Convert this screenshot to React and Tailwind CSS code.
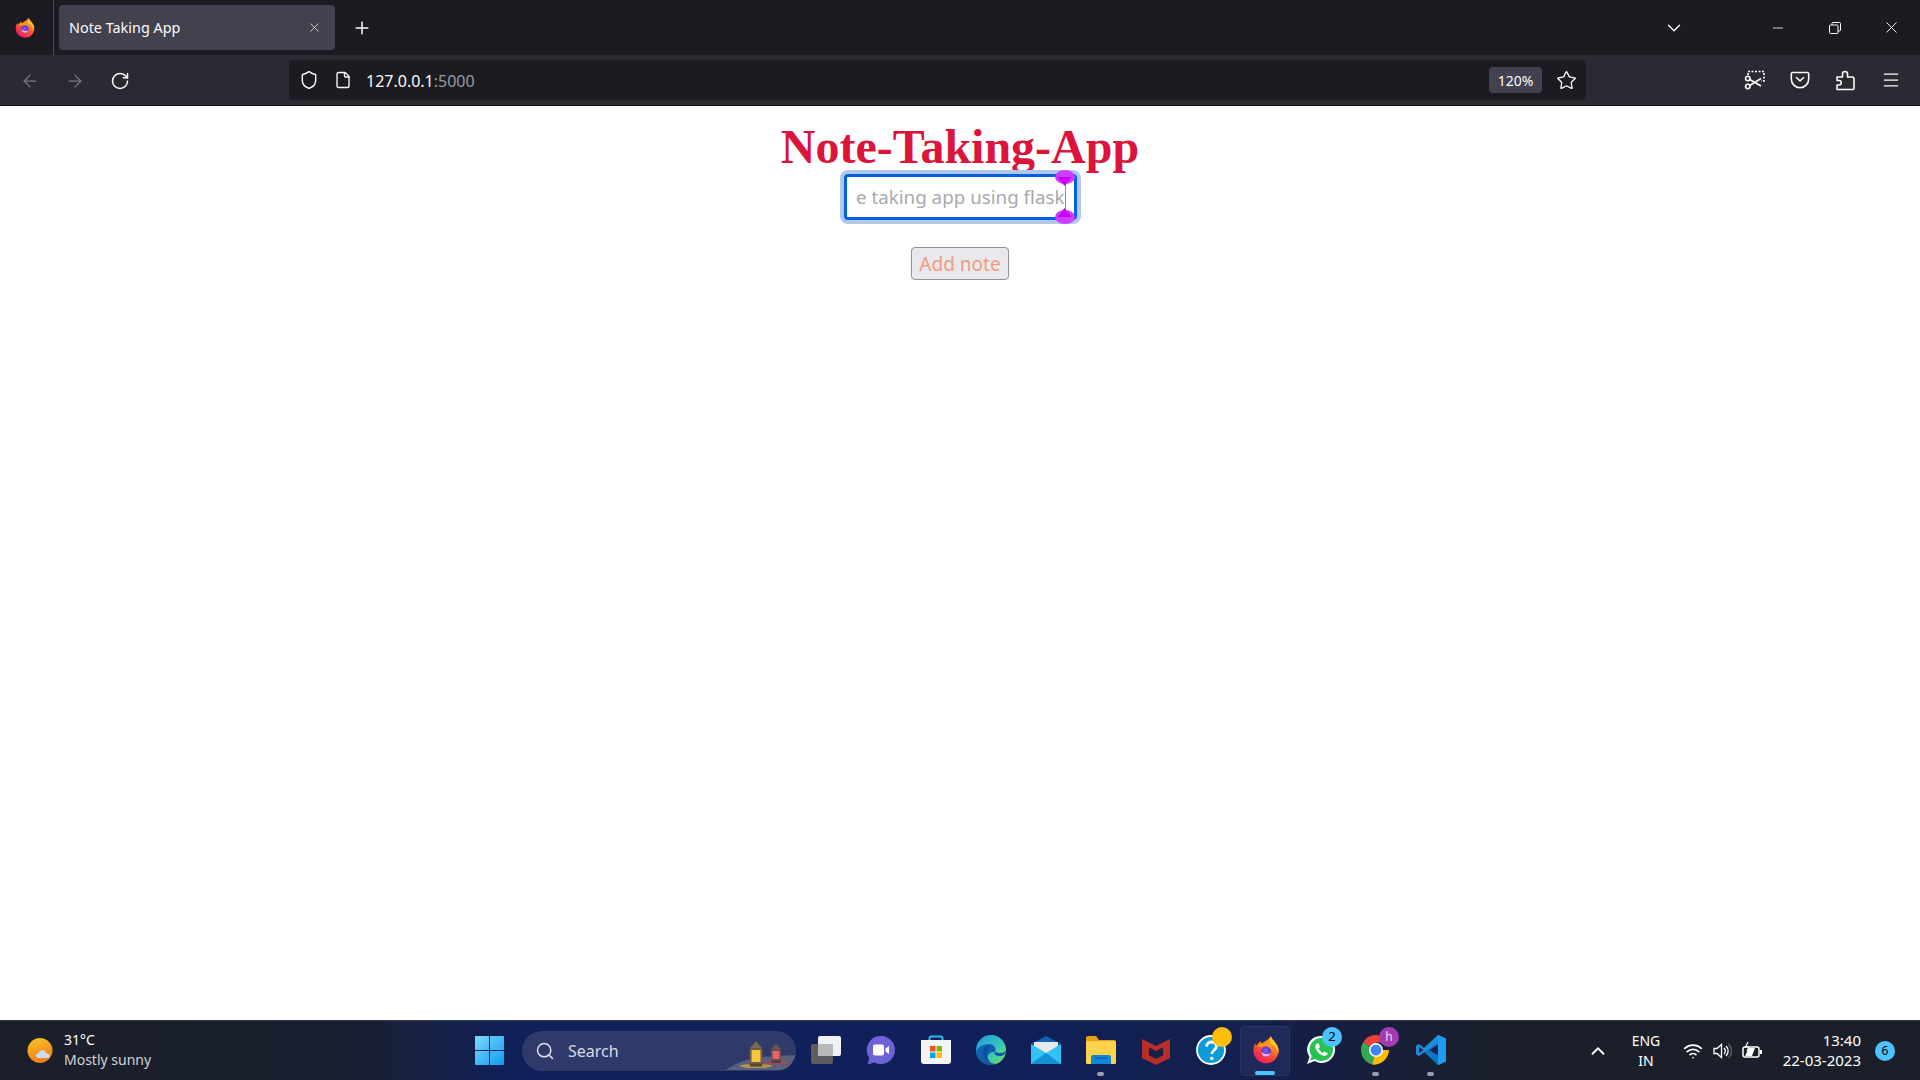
import React from "react";
import { ArrowLeft, ArrowRight, RotateCw, Shield, File, Star, ChevronDown, ChevronUp, Menu, Search, Plus, X, Minus, Wifi } from "lucide-react";

const ui = { fontFamily: '"Noto Sans", "Open Sans", sans-serif' };

function Firefox({ size, id }) {
  return (
    <svg width={size} height={size} viewBox="0 0 32 32">
      <defs>
        <linearGradient id={id + "a"} x1="0.8" y1="0.1" x2="0.25" y2="0.95">
          <stop offset="0" stopColor="#ffb21f" />
          <stop offset="0.5" stopColor="#ff5a22" />
          <stop offset="1" stopColor="#f0186a" />
        </linearGradient>
        <radialGradient id={id + "b"} cx="0.45" cy="0.45" r="0.6">
          <stop offset="0" stopColor="#8a5cf0" />
          <stop offset="1" stopColor="#5b2bb5" />
        </radialGradient>
      </defs>
      <path d="M21 1c.6 3.4 2.200 4.600 4.600 7 2.400 2.600 3.900 5.500 3.900 8.600C29.500 24 23.500 30 16 30S2.500 24 2.500 16.500c0-3 .8-5.600 2.200-7.800.3 1.200.9 2 1.700 2.600.4-2 2-3.600 4.200-4.800 0 1.400.5 2.400 1.500 2.900C13.500 6 19 6 21 1z" fill={`url(#${id}a)`} />
      <path d="M21 1c1.500 3.500 5.500 6.500 7.200 10.500 1 2.500 1.300 5 .8 8C27.500 13 24 10 19.500 9.500c1.500-2.500 1.500-5.500 1.500-8.500z" fill="#ffc426" />
      <path d="M6 12c3-3 7-4.500 11-3 4 1.400 6.500 5 6 9-1-3-3-5-6-5.500-4-.6-7.500 0-11-.5z" fill="#ff9a1f" />
      <circle cx="16" cy="17.500" r="5.500" fill={`url(#${id}b)`} />
      <path d="M10.500 18c.6 3 3 5 6 4.800 2.500-.2 4.500-2 5-4.300-1 1.300-2.800 2-4.600 1.800-2.500-.2-4.600-1-6.400-2.300z" fill="#f3c6ff" opacity="0.85" />
    </svg>
  );
}

function Scissors() {
  return (
    <svg width="22" height="22" viewBox="0 0 22 22" fill="none" stroke="#fbfbfe" strokeWidth="1.600">
      <path d="M4 6V2.500h16V12h-3" strokeDasharray="2 1.500" />
      <circle cx="3.800" cy="9.500" r="2.200" />
      <circle cx="3.800" cy="17.500" r="2.200" />
      <path d="M5.800 10.500 17 17M5.800 16.500 17 9.500" />
    </svg>
  );
}

function Pocket() {
  return (
    <svg width="20" height="20" viewBox="0 0 20 20" fill="none" stroke="#fbfbfe" strokeWidth="1.600" strokeLinecap="round" strokeLinejoin="round">
      <path d="M2.800 2.500h14.400a1.500 1.500 0 0 1 1.500 1.500v5a8.700 8.700 0 0 1-17.400 0V4a1.500 1.500 0 0 1 1.500-1.500z" />
      <path d="M6.500 7.500 10 11l3.500-3.500" />
    </svg>
  );
}

function PuzzleIcon() {
  return (
    <svg width="21" height="21" viewBox="0 0 21 21" fill="none" stroke="#fbfbfe" strokeWidth="1.600" strokeLinejoin="round">
      <path d="M2 19.500V15h2a2.200 2.200 0 0 0 0-4.500H2V7h5.500V4a2.500 2.500 0 0 1 5 0v3H17a2 2 0 0 1 2 2v9.500a1 1 0 0 1-1 1z" />
    </svg>
  );
}

function Restore() {
  return (
    <svg width="12" height="12" viewBox="0 0 12 12" fill="none" stroke="#fbfbfe" strokeWidth="1">
      <rect x="0.500" y="3" width="8.500" height="8.500" rx="1" />
      <path d="M3 3V1.500a1 1 0 0 1 1-1h6.500a1 1 0 0 1 1 1V8a1 1 0 0 1-1 1H9" />
    </svg>
  );
}

function Windows() {
  return (
    <svg width="29" height="29" viewBox="0 0 29 29">
      <defs>
        <linearGradient id="win" x1="0" y1="0" x2="1" y2="1">
          <stop offset="0" stopColor="#7fd8fb" />
          <stop offset="1" stopColor="#0d9bf0" />
        </linearGradient>
      </defs>
      <path d="M1 0h13v14H0V1a1 1 0 0 1 1-1zM15 0h13a1 1 0 0 1 1 1v13H15zM0 15h14v14H1a1 1 0 0 1-1-1zM15 15h14v13a1 1 0 0 1-1 1H15z" fill="url(#win)" />
    </svg>
  );
}

function Lanterns() {
  return (
    <svg width="70" height="30" viewBox="0 0 70 30">
      <path d="M0 29c12-9 24-11 36-13l34-2-4 8c-3 5-8 7-12 7z" fill="#5a5f7c" />
      <ellipse cx="30" cy="25" rx="16" ry="2" fill="#d9b23a" opacity="0.7" />
      <ellipse cx="50" cy="22" rx="13" ry="1.600" fill="#b8434f" opacity="0.7" />
      <path d="M30 0l6 7H24z" fill="#7a6a55" />
      <rect x="23.500" y="7" width="13" height="16" rx="1.500" fill="#6e5b3f" />
      <rect x="25.500" y="9" width="9" height="12" fill="#f6c743" />
      <rect x="24" y="23" width="12" height="2.500" fill="#54452f" />
      <path d="M50 3l5 5H45z" fill="#6d5a50" />
      <rect x="45" y="8" width="10" height="12" rx="1" fill="#6b4a46" />
      <rect x="46.500" y="10" width="7" height="8" fill="#e2636c" />
      <rect x="45.500" y="20" width="9" height="2" fill="#4e3b38" />
    </svg>
  );
}

function TaskView() {
  return (
    <svg width="30" height="28" viewBox="0 0 30 28">
      <rect x="0" y="8" width="22" height="20" rx="2" fill="#5c5d60" />
      <rect x="7" y="0" width="23" height="20" rx="2" fill="#f1f1f3" />
      <rect x="7" y="8" width="15" height="12" fill="#b7b8bb" />
    </svg>
  );
}

function Teams() {
  return (
    <svg width="30" height="30" viewBox="0 0 30 30">
      <path d="M15 1a14 14 0 1 1-6.500 26.400L1.500 29.500l1.800-6.500A14 14 0 0 1 15 1z" fill="#6f61d8" />
      <rect x="7" y="9.500" width="11" height="11" rx="2" fill="#fff" />
      <path d="M19.500 13.500 23 11v8l-3.500-2.500z" fill="#fff" />
    </svg>
  );
}

function Store() {
  return (
    <svg width="30" height="30" viewBox="0 0 30 30">
      <path d="M8.500 6V3.500A2 2 0 0 1 10.500 1.500h9a2 2 0 0 1 2 2V6" fill="none" stroke="#2fb4f0" strokeWidth="2" />
      <path d="M0 5h30v21a3 3 0 0 1-3 3H3a3 3 0 0 1-3-3z" fill="#f5f5f5" />
      <rect x="9" y="11" width="5.500" height="5.500" fill="#f25022" />
      <rect x="15.500" y="11" width="5.500" height="5.500" fill="#7fba00" />
      <rect x="9" y="17.500" width="5.500" height="5.500" fill="#00a4ef" />
      <rect x="15.500" y="17.500" width="5.500" height="5.500" fill="#ffb900" />
    </svg>
  );
}

function Edge() {
  return (
    <svg width="30" height="30" viewBox="0 0 30 30">
      <defs>
        <linearGradient id="edgeA" x1="0" y1="0" x2="1" y2="0.800">
          <stop offset="0" stopColor="#1b9de2" />
          <stop offset="0.600" stopColor="#35c1c1" />
          <stop offset="1" stopColor="#6be05f" />
        </linearGradient>
        <linearGradient id="edgeB" x1="0" y1="0" x2="1" y2="1">
          <stop offset="0" stopColor="#0f6cbd" />
          <stop offset="1" stopColor="#114a8b" />
        </linearGradient>
      </defs>
      <circle cx="15" cy="15" r="15" fill="url(#edgeA)" />
      <path d="M30 16c0 3-3 5-6.500 5-3 0-5-1-5-3 0-1 1-1.500 1-3.500 0-3-3-5.500-6.500-5.500C7 9 .2 13 0 17c.8 7.500 7 13 15 13 2 0 4-.4 5.500-1.200-5 .5-9-2.500-9-6.300 0-3.500 3-5.500 6-5.500 4 0 7 3 12.500-1z" fill="url(#edgeB)" />
      <path d="M14 10c-4 0-7 3-7 7 0 5 4 9 8 10-4-3-5-6-4-9 .6-2 2-3.500 3-8z" fill="#0b4f9e" />
    </svg>
  );
}

function Mail() {
  return (
    <svg width="30" height="30" viewBox="0 0 30 30">
      <path d="M15 1 30 9v20H0V9z" fill="#0f63b5" />
      <path d="M3 7h24v9l-12 6-12-6z" fill="#e8e8e8" />
      <path d="M0 9l15 9 15-9v20H0z" fill="#31c3f3" />
      <path d="M0 29l15-11 15 11z" fill="#1590d5" />
    </svg>
  );
}

function Explorer() {
  return (
    <svg width="30" height="28" viewBox="0 0 30 28">
      <path d="M0 2a2 2 0 0 1 2-2h8l3 4h15a2 2 0 0 1 2 2v4H0z" fill="#e3a20f" />
      <rect x="0" y="5" width="30" height="23" rx="1.500" fill="#ffd24d" />
      <path d="M5 28v-7a2 2 0 0 1 2-2h16a2 2 0 0 1 2 2v7z" fill="#0f86d6" />
      <rect x="9" y="21.500" width="12" height="1.500" fill="#0b5fa8" />
    </svg>
  );
}

function McAfee() {
  return (
    <svg width="28" height="30" viewBox="0 0 28 30">
      <path d="M0 4l7 3.500L14 11l7-3.500L28 4v19l-14 7-14-7z" fill="#b82e28" />
      <path d="M7 12.500l7 3.500 7-3.500v8L14 24l-7-3.500z" fill="#1a2048" />
    </svg>
  );
}

function Help() {
  return (
    <svg width="30" height="30" viewBox="0 0 30 30">
      <circle cx="15" cy="15" r="14" fill="#0d9ad6" stroke="#fff" strokeWidth="1.800" />
      <path d="M10.500 11.500c.5-3 2.500-4.500 5-4.500 3 0 5 1.800 5 4.300 0 3.700-4.700 3.700-4.700 7.700" fill="none" stroke="#fff" strokeWidth="2.800" />
      <circle cx="15.800" cy="23.500" r="1.800" fill="#fff" />
    </svg>
  );
}

function WhatsApp() {
  return (
    <svg width="30" height="30" viewBox="0 0 30 30">
      <path d="M15.500 1A13.500 13.500 0 1 1 8.500 26L1 29l2.500-7A13.500 13.500 0 0 1 15.500 1z" fill="#fff" />
      <path d="M15.500 3A11.500 11.500 0 1 1 9 24l-5 1.800 1.700-4.700A11.500 11.500 0 0 1 15.500 3z" fill="#25c44f" />
      <path d="M11 8.500c-1.500 1-2.200 2.500-1.500 4.700 1.500 4 4.500 6.500 8 7.500 2 .5 3.800-.5 4.300-2.500l-3.300-1.800-1.400 1.400c-2-.7-3.500-2.200-4.500-4.300l1.300-1.300L12.800 8.500z" fill="#fff" />
    </svg>
  );
}

function Chrome() {
  return (
    <svg width="30" height="30" viewBox="0 0 30 30">
      <path d="M15 15 2 7.500A15 15 0 0 1 28 7.500H15z" fill="#ea4335" />
      <path d="M15 15 2 7.500A15 15 0 0 0 11 29.500z" fill="#34a853" />
      <path d="M15 15h13A15 15 0 0 1 11 29.500z" fill="#fbbc05" />
      <circle cx="15" cy="15" r="7" fill="#fff" />
      <circle cx="15" cy="15" r="5.500" fill="#4285f4" />
    </svg>
  );
}

function VSCode() {
  return (
    <svg width="30" height="30" viewBox="0 0 30 30">
      <path d="M22 0l8 3.500v23L22 30 8 17l-5 4-3-2v-8l3-2 5 4z" fill="#0b78c4" />
      <path d="M22 0l8 3.500v23L22 30z" fill="#1f9cf0" />
      <path d="M0 19l3 2L22 7.500V0L8 13 3 9l-3 2z" fill="#2a9fe8" opacity="0.6" />
      <path d="M3 12l4.500 3L3 18z" fill="#1a2048" />
      <path d="M22 9.500 13.500 15l8.500 5.500z" fill="#1a2048" />
    </svg>
  );
}

function TaskItem({ children, dot, active, badge }) {
  return (
    <div className="relative flex h-[50px] w-[55px] shrink-0 items-center justify-center">
      {active && <span className="absolute inset-y-0 left-[2px] w-[50px] rounded border border-[#2a3668] bg-[#1f2a5a]" />}
      <span className="relative mt-[-1px] flex">{children}</span>
      {badge}
      {dot && <span className="absolute bottom-0 left-[24px] h-[4px] w-[7px] rounded-full bg-[#9a9fae]" />}
      {active && <span className="absolute bottom-[1px] left-[17px] h-[4px] w-[20px] rounded-full bg-[#4cc2ff]" />}
    </div>
  );
}

function BrowserChrome() {
  return (
    <>
      <div className="flex h-[55px] shrink-0 items-center bg-[#1c1b22] text-[#fbfbfe]" style={ui}>
        <div className="flex h-full w-[54px] items-center justify-center border-r border-[#4a4a52] pr-[3px]">
          <Firefox size={22} id="ff1" />
        </div>
        <div className="ml-[5px] flex h-[45px] w-[276px] items-center justify-between rounded bg-[#42414d] pl-[10px] pr-[13px]">
          <span className="text-[14.4px]">Note Taking App</span>
          <X size={15} strokeWidth={1.500} color="#d0d0d6" />
        </div>
        <div className="ml-[17px] flex items-center"><Plus size={20} strokeWidth={1.800} /></div>
        <div className="ml-auto flex items-center">
          <ChevronDown size={22} strokeWidth={1.500} />
          <div className="ml-[81px] flex w-[24px] justify-center"><Minus size={16} strokeWidth={1.200} /></div>
          <div className="ml-[33px] flex w-[24px] justify-center"><Restore /></div>
          <div className="ml-[32px] mr-[17px] flex w-[24px] justify-center"><X size={19} strokeWidth={1.200} /></div>
        </div>
      </div>
      <div className="flex h-[51px] shrink-0 items-center border-b border-[#16151b] bg-[#2b2a33] text-[#fbfbfe]" style={ui}>
        <ArrowLeft className="ml-[20px] mt-[1px]" size={20} strokeWidth={1.500} color="#7a7a82" />
        <ArrowRight className="ml-[25px] mt-[1px]" size={20} strokeWidth={1.500} color="#7a7a82" />
        <RotateCw className="ml-[25px] mt-[1px]" size={20} strokeWidth={1.800} />
        <div className="ml-[159px] flex h-[40px] w-[1297px] items-center rounded bg-[#1c1b22]">
          <Shield className="ml-[10px]" size={20} strokeWidth={1.700} />
          <File className="ml-[15px]" size={18} strokeWidth={1.800} />
          <span className="ml-[14px] pt-[2px] text-[16px]">127.0.0.1<span className="text-[#9a9aa0]">:5000</span></span>
          <div className="ml-auto flex h-[26px] w-[53px] items-center justify-center rounded bg-[#42414d] text-[14px]">120%</div>
          <Star className="ml-[14px] mr-[9px]" size={21} strokeWidth={1.500} />
        </div>
        <div className="ml-[158px] flex w-[22px] justify-center"><Scissors /></div>
        <div className="ml-[24px] flex w-[20px] justify-center"><Pocket /></div>
        <div className="ml-[25px] flex"><PuzzleIcon /></div>
        <Menu className="ml-[25px]" size={20} strokeWidth={1.500} />
      </div>
    </>
  );
}

function Taskbar() {
  return (
    <div className="flex h-[60px] shrink-0 items-center border-t border-[#383b47] bg-[linear-gradient(90deg,#1b1f29_0%,#1a2030_18%,#10205a_27%,#10205a_52%,#141f4a_66%,#1b1f2b_78%,#1b1f29_100%)] text-white" style={ui}>
      <div className="flex w-[469px] shrink-0 items-center pl-[27px]">
        <svg width="28" height="28" viewBox="0 0 28 28">
          <defs>
            <linearGradient id="sun" x1="0.300" y1="0" x2="0.600" y2="1">
              <stop offset="0" stopColor="#f4c02a" />
              <stop offset="1" stopColor="#f47a12" />
            </linearGradient>
          </defs>
          <circle cx="13" cy="13.500" r="12.500" fill="url(#sun)" />
          <path d="M12 21c-2 0-3-1-3-2.500s1.200-2.300 2.500-2.300c.5-2 2-3 3.800-3 2 0 3.500 1.300 3.800 3 2-.2 3.500 1 3.500 2.500S21.500 21 20 21z" fill="#c9dcf6" />
        </svg>
        <div className="ml-[9px] mt-[-2px] flex flex-col text-[14px] leading-[20px]">
          <span>31°C</span>
          <span className="text-[#cfd2d8]">Mostly sunny</span>
        </div>
      </div>
      <div className="flex w-[40px] shrink-0 justify-center"><Windows /></div>
      <div className="ml-[13px] flex h-[40px] w-[274px] shrink-0 items-center overflow-hidden rounded-full bg-[#303a6a]">
        <Search className="ml-[13px]" size={20} strokeWidth={1.800} color="#e0e2ea" />
        <span className="ml-[13px] text-[16px] text-[#d8dbe6]">Search</span>
        <div className="ml-auto flex self-end"><Lanterns /></div>
      </div>
      <div className="ml-[2px] flex items-center">
        <TaskItem><TaskView /></TaskItem>
        <TaskItem><Teams /></TaskItem>
        <TaskItem><Store /></TaskItem>
        <TaskItem><Edge /></TaskItem>
        <TaskItem><Mail /></TaskItem>
        <TaskItem dot><Explorer /></TaskItem>
        <TaskItem><McAfee /></TaskItem>
        <TaskItem badge={<span className="absolute right-[6px] top-[1px] h-[20px] w-[20px] rounded-full bg-[#fdbd0a]" />}><Help /></TaskItem>
        <TaskItem active><Firefox size={30} id="ff2" /></TaskItem>
        <TaskItem badge={<span className="absolute right-[6px] top-[1px] flex h-[20px] w-[20px] items-center justify-center rounded-full bg-[#4cc2ff] text-[13px] text-black">2</span>}><WhatsApp /></TaskItem>
        <TaskItem dot badge={<span className="absolute right-[4px] top-[1px] flex h-[20px] w-[20px] items-center justify-center rounded-full bg-[#a23bb0] text-[12px] text-[#f2d9f5]">h</span>}><Chrome /></TaskItem>
        <TaskItem dot><VSCode /></TaskItem>
      </div>
      <div className="ml-[129px] flex items-center">
        <ChevronUp size={22} strokeWidth={2} />
        <div className="ml-[15px] flex w-[44px] flex-col items-center text-[14px] leading-[20px]">
          <span>ENG</span>
          <span>IN</span>
        </div>
        <Wifi className="ml-[15px]" size={20} strokeWidth={2} />
        <svg className="ml-[10px]" width="20" height="18" viewBox="0 0 20 18" fill="none" stroke="#fff" strokeWidth="1.300">
          <path d="M1 6.500h3L8.500 2.500v13L4 11.500H1z" />
          <path d="M11 6a4 4 0 0 1 0 6M13 4a7 7 0 0 1 0 10" />
          <path d="M15.500 2a10 10 0 0 1 0 14" stroke="#666" />
        </svg>
        <svg className="ml-[9px]" width="21" height="18" viewBox="0 0 21 18" fill="none" stroke="#fff" strokeWidth="1.500">
          <rect x="1" y="5" width="16" height="10" rx="2" />
          <rect x="18" y="8" width="2" height="4" fill="#fff" stroke="none" />
          <path d="M3 14 7 6h6l-3 8z" fill="#fff" stroke="none" />
          <path d="M6 0 3.500 5H7L5 9" strokeWidth="1.200" />
        </svg>
        <div className="ml-[18px] mt-[-2px] flex w-[80px] flex-col items-end text-[15px] leading-[20px]">
          <span>13:40</span>
          <span className="whitespace-nowrap">22-03-2023</span>
        </div>
        <span className="ml-[14px] flex h-[20px] w-[20px] items-center justify-center rounded-full bg-[#4cc2ff] text-[12px] text-black">6</span>
      </div>
    </div>
  );
}

export default function App() {
  return (
    <div className="flex h-screen w-full flex-col overflow-hidden bg-white">
      <BrowserChrome />
      <main className="flex min-h-0 flex-1 flex-col items-center">
        <h1 className="mt-[13px] text-[48px] font-bold leading-[55px] text-[#dc143c]" style={{ fontFamily: '"Liberation Serif", serif' }}>Note-Taking-App</h1>
        <div className="relative mt-[-4px] flex h-[54px] w-[241px] items-center rounded-[8px] bg-[#b0c8ec] p-[4px]">
          <div className="h-full w-full rounded-[4px] border-[3px] border-[#0060df] bg-white pl-[9px] pr-[8px]" style={ui}>
            <div className="flex h-full w-full items-center justify-end overflow-hidden">
              <span className="shrink-0 whitespace-nowrap border-r border-[#888] text-[18.8px] leading-[40px] text-[#a9a9a9]">Note taking app using flask</span>
            </div>
          </div>
          <span className="absolute right-[6px] top-0 h-[14px] w-[20px] rounded-[50%] bg-[#cf3cff]" />
          <span className="absolute right-[9px] top-[7px] h-[9px] w-[14px] bg-[#c800ff] [clip-path:polygon(0_0,100%_0,50%_100%)]" />
          <span className="absolute bottom-0 right-[6px] h-[14px] w-[20px] rounded-[50%] bg-[#cf3cff]" />
          <span className="absolute bottom-[7px] right-[9px] h-[9px] w-[14px] bg-[#c800ff] [clip-path:polygon(0_100%,100%_100%,50%_0)]" />
        </div>
        <button className="mt-[23px] flex h-[33px] w-[98px] items-center justify-center rounded-[4px] border border-[#8f8f9d] bg-[#e9e9ed] pt-[2px] text-[19px] text-[#f09a7e]" style={ui}>Add note</button>
      </main>
      <Taskbar />
    </div>
  );
}
